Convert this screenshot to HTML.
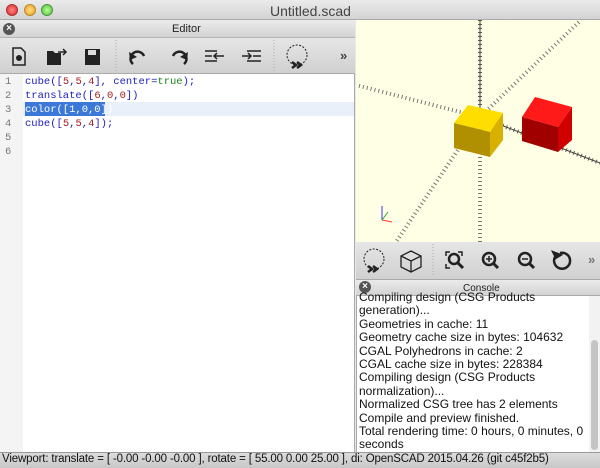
<!DOCTYPE html>
<html><head><meta charset="utf-8"><style>
*{margin:0;padding:0;box-sizing:border-box}
body{width:600px;height:468px;overflow:hidden;background:#e8e8e8;font-family:"Liberation Sans",sans-serif;position:relative}
.a{position:absolute}
.tb{background:linear-gradient(#ebebeb,#d3d3d3)}
.code{font-family:"Liberation Mono",monospace;font-size:10.5px;line-height:14px;color:#2020c0}
.n{color:#a02020}.g{color:#208020}
.cl{font-size:12px;line-height:13.4px;color:#111}
</style></head><body>
<!-- title bar -->
<div class="a tb" style="left:0;top:0;width:600px;height:20px;border-bottom:1px solid #aaa"></div>
<div class="a" style="left:6px;top:4px;width:12px;height:12px;border-radius:6px;background:radial-gradient(#f88,#d22);border:1px solid #a33"></div>
<div class="a" style="left:24px;top:4px;width:12px;height:12px;border-radius:6px;background:radial-gradient(#fd8,#e9a020);border:1px solid #b82"></div>
<div class="a" style="left:41px;top:4px;width:12px;height:12px;border-radius:6px;background:radial-gradient(#bf9,#5b3);border:1px solid #494"></div>
<div class="a" style="left:270px;top:3px;font-size:14px;color:#444">Untitled.scad</div>
<!-- editor header -->
<div class="a tb" style="left:0;top:20px;width:355px;height:18px;border-bottom:1px solid #b5b5b5"></div>
<div class="a" style="left:3px;top:23px;width:12px;height:12px;border-radius:6px;background:#555;color:#fff;font-size:10px;line-height:12px;text-align:center;font-weight:bold">×</div>
<div class="a" style="left:172px;top:23px;font-size:11px;color:#222">Editor</div>
<!-- editor toolbar -->
<div class="a tb" style="left:0;top:38px;width:355px;height:36px;background:linear-gradient(#e6e6e6,#d0d0d0);border-bottom:1px solid #aaa"></div>
<svg class="a" style="left:0;top:38px" width="355" height="36" fill="none" stroke="#222" stroke-width="2">
<path d="M13 10h8l4 4v13H13z" stroke-width="1.5"/><circle cx="19" cy="20" r="2" fill="#222"/>
<path d="M47 13h6l2 2h6v12H47z" fill="#222" stroke="none"/><path d="M58 14h8M63 11l3 3-3 3" stroke-width="1.5"/>
<path d="M85 11h15v16H85z" fill="#222" stroke="none"/><rect x="88" y="12" width="8" height="5" fill="#ddd" stroke="none"/>
<line x1="116" y1="2" x2="116" y2="34" stroke="#aaa" stroke-dasharray="1 2" stroke-width="1"/>
<path d="M133 26a7 7 0 1 1 11-8" stroke-width="2.5"/><path d="M129 14l1 8 7-3z" fill="#222" stroke="none"/>
<path d="M184 26a7 7 0 1 0-11-8" stroke-width="2.5"/><path d="M188 14l-1 8-7-3z" fill="#222" stroke="none"/>
<path d="M205 13h12M205 18h7M205 23h12M214 18h10M217 15l-3 3 3 3" stroke-width="1.5"/>
<path d="M247 13h14M253 18h8M247 23h14M242 18h9M248 15l3 3-3 3" stroke-width="1.5"/>
<line x1="274" y1="2" x2="274" y2="34" stroke="#aaa" stroke-dasharray="1 2" stroke-width="1"/>
<circle cx="297" cy="17" r="10" stroke-width="1" stroke-dasharray="2 1.5"/>
<path d="M292 24l4 3-4 3M297 24l4 3-4 3" stroke-width="2.5"/>
<text x="340" y="22" font-size="13" fill="#444" stroke="none" font-weight="bold">»</text>
</svg>
<!-- code area -->
<div class="a" style="left:0;top:74px;width:355px;height:378px;background:#fff;border-right:1px solid #aaa"></div>
<div class="a" style="left:0;top:74px;width:23px;height:378px;background:#f4f4f4"></div>
<div class="a" style="left:23px;top:102px;width:331px;height:14px;background:#eaf0fa"></div>
<div class="a" style="left:25px;top:102px;width:80px;height:14px;background:#3c78d8"></div>
<div class="a code" style="left:5px;top:75px;color:#777">1<br>2<br>3<br>4<br>5<br>6</div>
<div class="a code" style="left:25px;top:75px">cube([<span class="n">5</span>,<span class="n">5</span>,<span class="n">4</span>], center=<span class="g">true</span>);<br>translate([<span class="n">6</span>,<span class="n">0</span>,<span class="n">0</span>])<br><span style="color:#fff">color([1,0,0])</span><br>cube([<span class="n">5</span>,<span class="n">5</span>,<span class="n">4</span>]);</div>
<!-- viewport -->
<div class="a" style="left:356px;top:20px;width:244px;height:222px;background:#ffffe5"></div>
<svg class="a" style="left:356px;top:20px" width="244" height="222" stroke="#333" fill="none">
<g stroke-width="1">
<line x1="124" y1="0" x2="124" y2="97"/>
<line x1="124" y1="97" x2="244" y2="143"/>
</g>
<g stroke-width="4" stroke="#555" stroke-dasharray="1 3">
<line x1="124" y1="0" x2="124" y2="97"/>
<line x1="124" y1="97" x2="244" y2="143"/>
</g>
<g stroke-width="4" stroke="#777" stroke-dasharray="1 3">
<line x1="124" y1="97" x2="225" y2="0"/>
<line x1="124" y1="97" x2="0" y2="65"/>
<line x1="124" y1="97" x2="124" y2="222"/>
<line x1="124" y1="97" x2="40" y2="222"/>
</g>
<polygon points="98,103 112,85 147,93 134,112" fill="#fedd00" stroke="none"/>
<polygon points="98,103 134,112 134,137 98,128" fill="#b09000" stroke="none"/>
<polygon points="134,112 147,93 147,120 134,137" fill="#d8b000" stroke="none"/>
<polygon points="166,97 179,77 216,87 202,107" fill="#ff1a1a" stroke="none"/>
<polygon points="166,97 202,107 202,132 166,121" fill="#a00000" stroke="none"/>
<polygon points="202,107 216,87 216,120 202,132" fill="#d00000" stroke="none"/>
<line x1="26" y1="200" x2="26" y2="186" stroke="#33f"/><line x1="26" y1="200" x2="36" y2="202" stroke="#f33"/><line x1="26" y1="200" x2="32" y2="192" stroke="#3a3"/>
</svg>
<!-- viewport toolbar -->
<div class="a" style="left:356px;top:242px;width:244px;height:37px;background:linear-gradient(#e6e6e6,#d0d0d0)"></div>
<svg class="a" style="left:356px;top:242px" width="244" height="37" fill="none" stroke="#222" stroke-width="2">
<circle cx="18" cy="17" r="10" stroke-width="1" stroke-dasharray="2 1.5"/>
<path d="M12 24l4 3-4 3M17 24l4 3-4 3" stroke-width="2.5"/>
<path d="M55 9l10 5v11l-10 5-10-5V14zM45 14l10 5 10-5M55 19v11" stroke-width="1.3"/>
<line x1="77" y1="2" x2="77" y2="35" stroke="#aaa" stroke-dasharray="1 2" stroke-width="1"/>
<path d="M90 14v-4h4M106 14v-4h-4M90 22v4h4" stroke-width="1.5"/><circle cx="98" cy="17" r="5" stroke-width="2.5"/><path d="M102 21l5 5" stroke-width="3"/>
<circle cx="133" cy="17" r="6" stroke-width="2.5"/><path d="M137 21l5 5" stroke-width="3"/><path d="M130 17h6M133 14v6" stroke-width="1.5"/>
<circle cx="169" cy="17" r="6" stroke-width="2.5"/><path d="M173 21l5 5" stroke-width="3"/><path d="M166 17h6" stroke-width="1.5"/>
<path d="M204 11a8 8 0 1 1-5 4" stroke-width="2.5"/><path d="M197 10l3 6 5-3z" fill="#222"/>
<text x="232" y="22" font-size="13" fill="#777" stroke="none" font-weight="bold">»</text>
</svg>
<!-- console -->
<div class="a tb" style="left:356px;top:279px;width:244px;height:17px;border-top:1px solid #aaa;border-bottom:1px solid #aaa"></div>
<div class="a" style="left:359px;top:281px;width:12px;height:12px;border-radius:6px;background:#555;color:#fff;font-size:10px;line-height:12px;text-align:center;font-weight:bold">×</div>
<div class="a" style="left:463px;top:283px;font-size:10px;color:#222">Console</div>
<div class="a" style="left:356px;top:296px;width:244px;height:156px;background:#fff;overflow:hidden;border-left:1px solid #aaa"></div>
<div class="a" style="left:589px;top:296px;width:11px;height:156px;background:#f2f2f2"></div>
<div class="a" style="left:591px;top:340px;width:7px;height:110px;border-radius:4px;background:#c4c4c4"></div>
<div class="a cl" style="left:359px;top:291px;width:230px;height:161px;overflow:hidden;padding-top:0">Compiling design (CSG Products<br>generation)...<br>Geometries in cache: 11<br>Geometry cache size in bytes: 104632<br>CGAL Polyhedrons in cache: 2<br>CGAL cache size in bytes: 228384<br>Compiling design (CSG Products<br>normalization)...<br>Normalized CSG tree has 2 elements<br>Compile and preview finished.<br>Total rendering time: 0 hours, 0 minutes, 0<br>seconds</div>
<!-- status -->
<div class="a" style="left:0;top:452px;width:600px;height:16px;background:linear-gradient(#dcdcdc,#c8c8c8);border-top:1px solid #999"></div>
<div class="a" style="left:2px;top:453px;font-size:11.5px;color:#111;white-space:nowrap;letter-spacing:-0.15px">Viewport: translate = [ -0.00 -0.00 -0.00 ], rotate = [ 55.00 0.00 25.00 ], di: OpenSCAD 2015.04.26 (git c45f2b5)</div>
</body></html>
